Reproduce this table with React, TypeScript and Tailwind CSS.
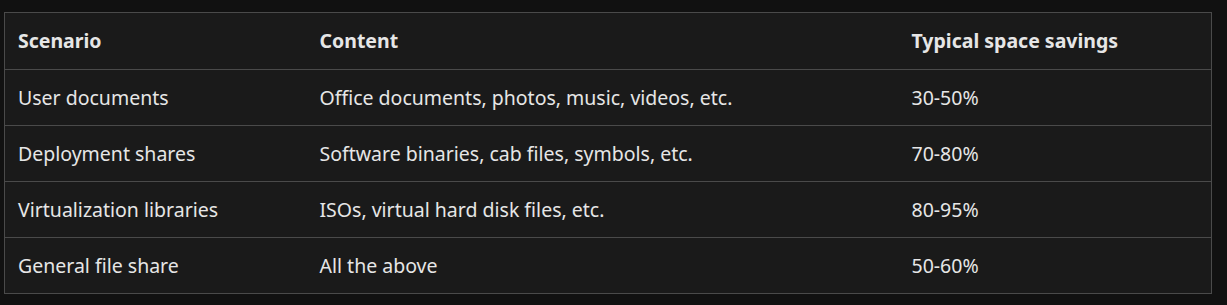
import React from 'react';

const rows = [
  ['User documents', 'Office documents, photos, music, videos, etc.', '30-50%'],
  ['Deployment shares', 'Software binaries, cab files, symbols, etc.', '70-80%'],
  ['Virtualization libraries', 'ISOs, virtual hard disk files, etc.', '80-95%'],
  ['General file share', 'All the above', '50-60%'],
];

const App = () => {
  return (
    <div className="h-[305px] w-[1227px] bg-[#111111] pt-3 pl-1 font-['Noto_Sans',sans-serif] text-[19.5px] text-[#e6e6e6]">
      <table className="w-[1208px] border-collapse border border-[#4a4a4a] bg-[#1a1a1a] text-left">
        <colgroup>
          <col className="w-[302px]" />
          <col className="w-[592px]" />
          <col />
        </colgroup>
        <thead>
          <tr className="h-[57px]">
            <th className="border-b border-[#4a4a4a] px-[13px] font-bold">Scenario</th>
            <th className="border-b border-[#4a4a4a] px-[13px] font-bold">Content</th>
            <th className="border-b border-[#4a4a4a] px-[13px] font-bold">Typical space savings</th>
          </tr>
        </thead>
        <tbody>
          {rows.map((r) => (
            <tr key={r[0]} className="h-[56px] border-b border-[#4a4a4a]">
              <td className="px-[13px]">{r[0]}</td>
              <td className="px-[13px]">{r[1]}</td>
              <td className="px-[13px]">{r[2]}</td>
            </tr>
          ))}
        </tbody>
      </table>
    </div>
  );
};

export default App;
